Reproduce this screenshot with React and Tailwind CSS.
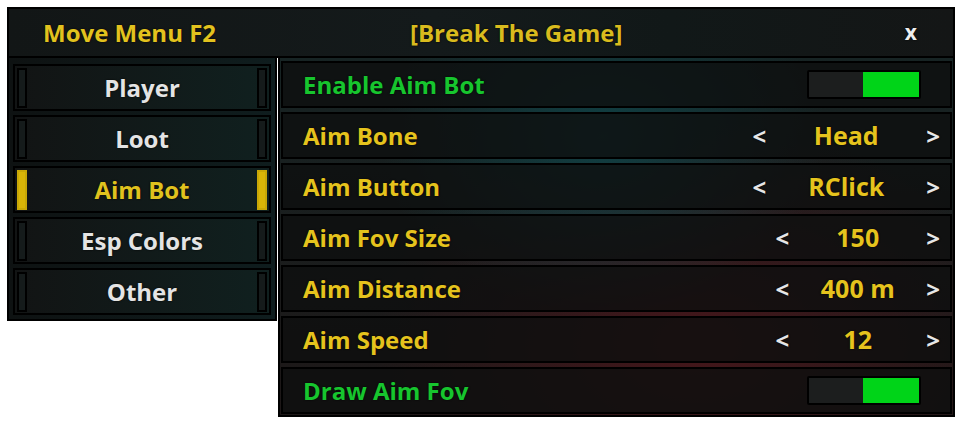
const tabs = [
  { name: "Player" },
  { name: "Loot" },
  { name: "Aim Bot", active: true },
  { name: "Esp Colors" },
  { name: "Other" },
];

const rows = [
  { label: "Enable Aim Bot", kind: "toggle" },
  { label: "Aim Bone", kind: "pick", value: "Head", wide: true },
  { label: "Aim Button", kind: "pick", value: "RClick", wide: true },
  { label: "Aim Fov Size", kind: "pick", value: "150" },
  { label: "Aim Distance", kind: "pick", value: "400 m" },
  { label: "Aim Speed", kind: "pick", value: "12" },
  { label: "Draw Aim Fov", kind: "toggle" },
];

function Toggle() {
  return (
    <div className="flex h-[29px] w-[114px] justify-end rounded-[2px] border-2 border-black bg-[#1c1e1e]">
      <div className="w-[56px] bg-[#00d418]" />
    </div>
  );
}

function Picker({ value, wide }) {
  return (
    <div className="flex items-center text-[24px] font-bold">
      <span className="text-[#e6e6e6]">&lt;</span>
      <span className={`${wide ? "w-[160px]" : "w-[137px]"} text-center text-[25px] text-[#e5c31d]`}>
        {value}
      </span>
      <span className="text-[#e6e6e6]">&gt;</span>
    </div>
  );
}

export default function App() {
  return (
    <div className="h-[423px] w-[960px] bg-white pl-[7px] pt-[7px] font-['Open_Sans',sans-serif] [text-shadow:0_0_2px_#000]">
      <div className="w-[948px]">
        {/* title bar */}
        <div className="flex h-[51px] items-center border-2 border-black bg-[linear-gradient(90deg,#121616,#141a1b_45%,#111818_70%,#141616)] px-[34px]">
          <div className="w-[250px] text-[24px] font-bold text-[#e2c21e]">Move Menu F2</div>
          <div className="flex-1 pl-[117px] text-[24px] font-bold text-[#d9bb1e]">[Break The Game]</div>
          <div className="pr-[2px] text-[21px] font-bold text-[#efefef]">x</div>
        </div>

        <div className="flex items-start">
          {/* sidebar */}
          <div className="flex w-[270px] flex-col gap-[4px] border-2 border-t-0 border-black bg-[linear-gradient(90deg,#0e1212,#0f1d1e)] px-[4px] pb-[4px] pt-[6px]">
            {tabs.map((t) => (
              <div
                key={t.name}
                className="flex h-[47px] items-center justify-between border-2 border-black bg-[linear-gradient(90deg,#121414,#10201f)] px-[2px]"
              >
                <div className={`h-[40px] w-[10px] border-2 ${t.active ? "border-[#c9a806] bg-[#d9b507]" : "border-black bg-[#151b1b]"}`} />
                <div className={`text-[24px] font-bold ${t.active ? "text-[#e0c21e]" : "text-[#e4e4e4]"}`}>{t.name}</div>
                <div className={`h-[40px] w-[10px] border-2 ${t.active ? "border-[#c9a806] bg-[#d9b507]" : "border-black bg-[#151b1b]"}`} />
              </div>
            ))}
          </div>

          {/* settings */}
          <div className="ml-[1px] flex flex-1 flex-col gap-[4px] border-2 border-t-0 border-black bg-[radial-gradient(ellipse_at_48%_22%,#104044,transparent_45%),radial-gradient(ellipse_at_62%_80%,#45161a,transparent_55%),linear-gradient(180deg,#172424,#1d1717)] px-[1px] pb-[1px] pt-[3px]">
            {rows.map((r) => (
              <div
                key={r.label}
                className="flex h-[47px] items-center justify-between border-2 border-black bg-[#0d0f0fd0] pl-[20px] pr-[10px]"
              >
                <div className={`text-[24px] font-bold ${r.kind === "toggle" ? "text-[#17c52e]" : "text-[#e5c31d]"}`}>
                  {r.label}
                </div>
                {r.kind === "toggle" ? (
                  <div className="pr-[19px]">
                    <Toggle />
                  </div>
                ) : (
                  <Picker value={r.value} wide={r.wide} />
                )}
              </div>
            ))}
          </div>
        </div>
      </div>
    </div>
  );
}
